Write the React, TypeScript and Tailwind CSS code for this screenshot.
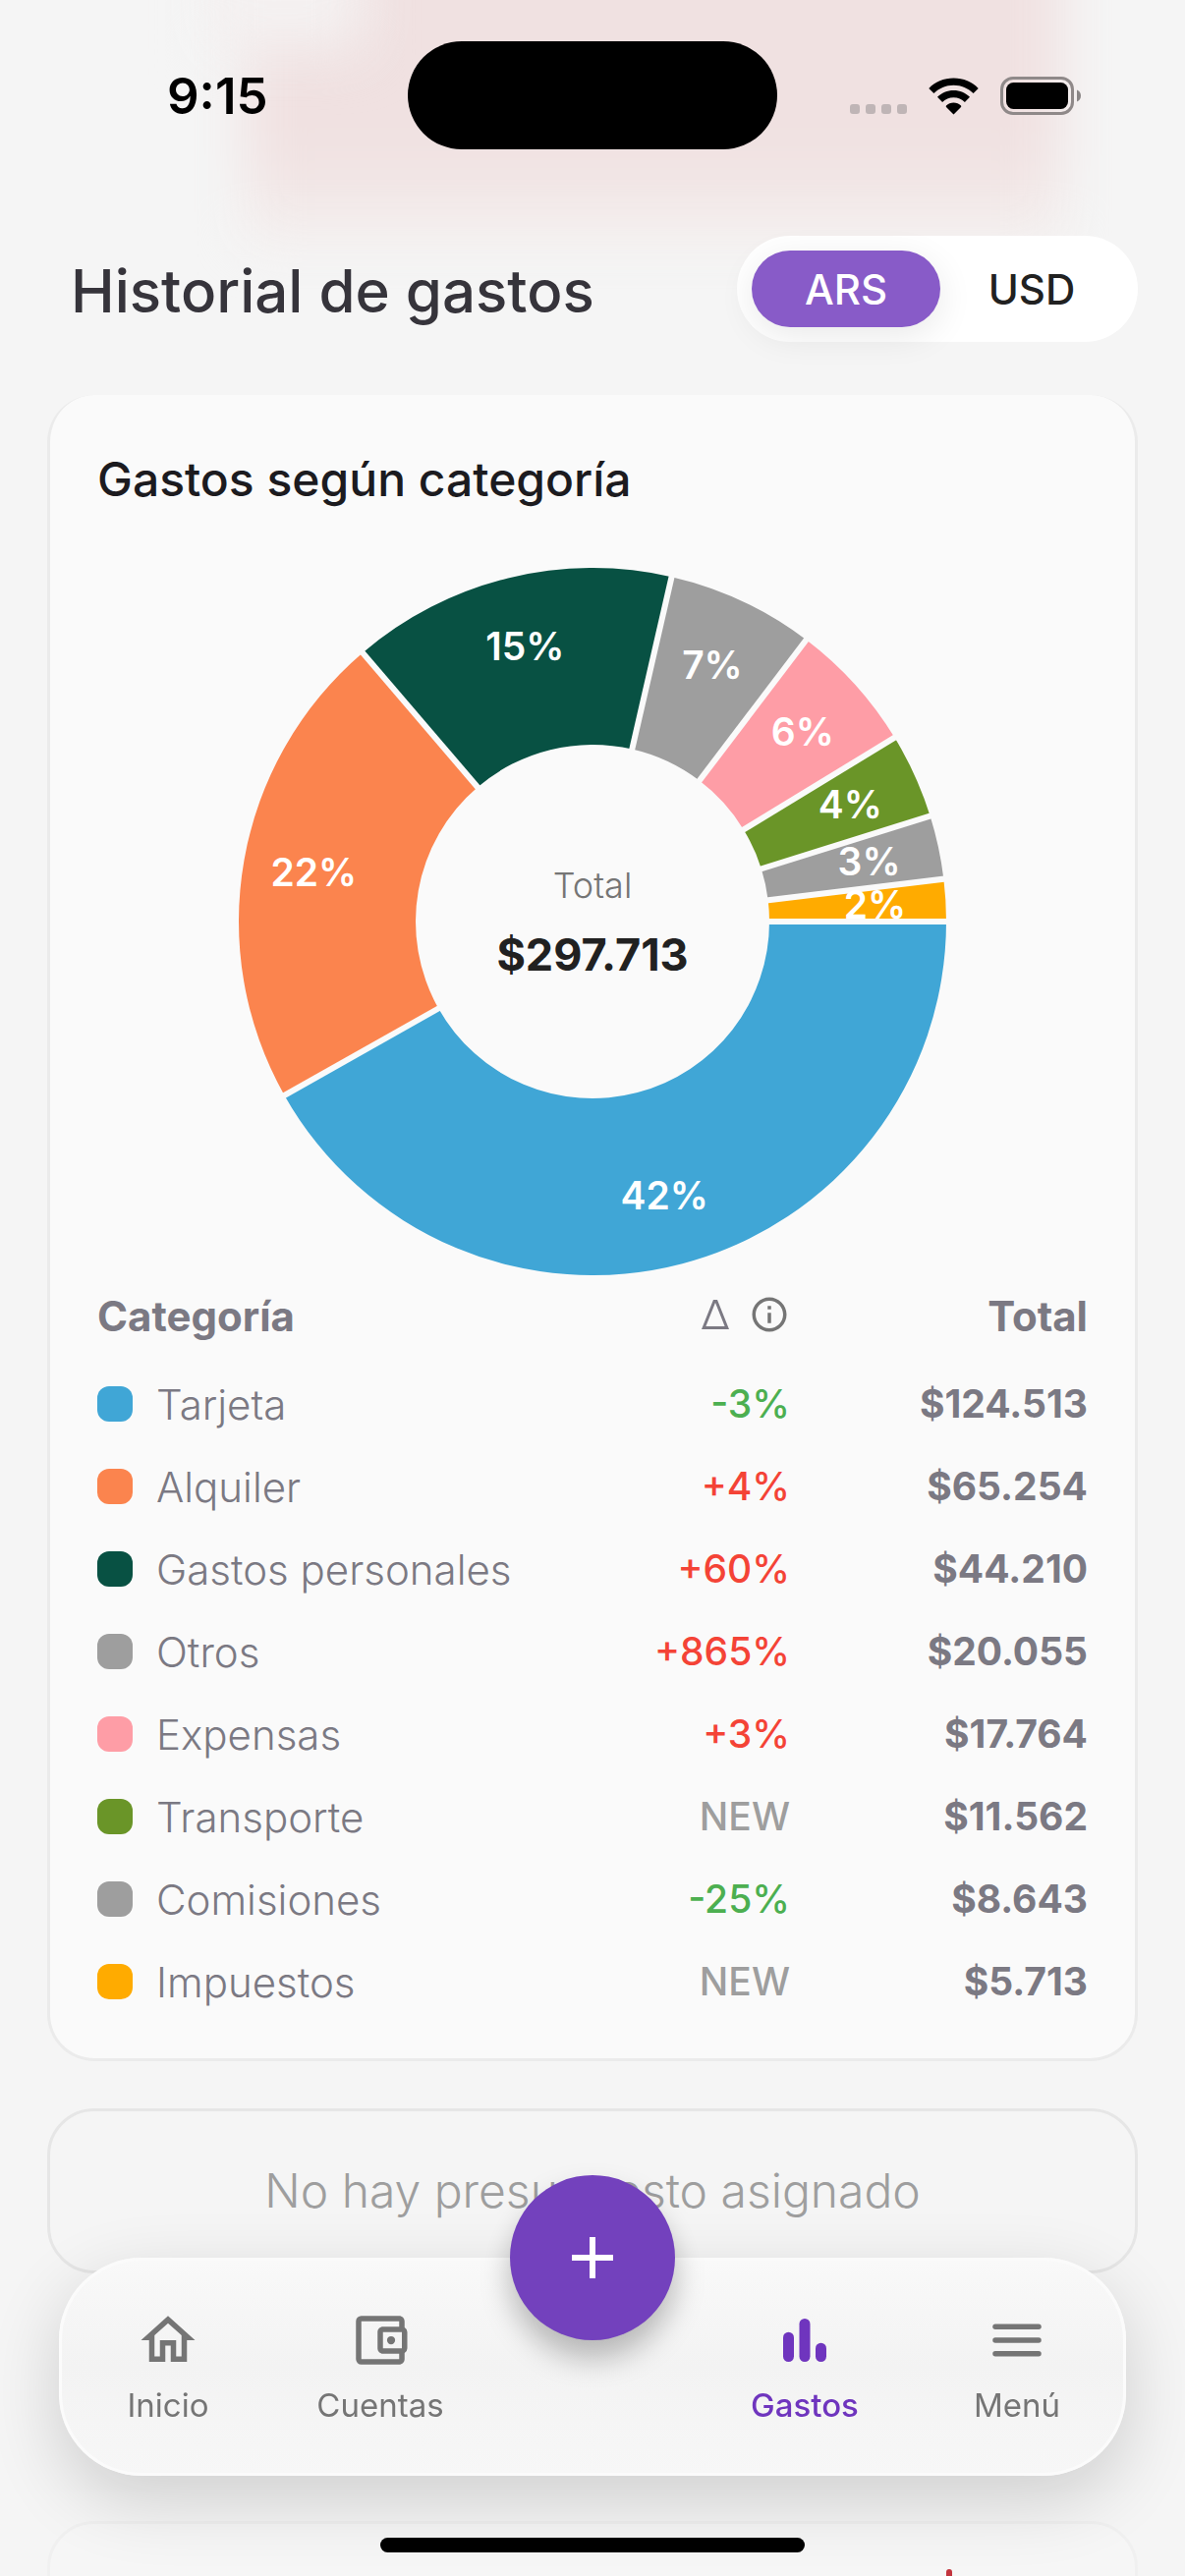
import { useState, type ReactNode } from 'react';
import clsx from 'clsx';

type Category = {
  name: string;
  amount: number;
  percent: number;
  delta: string;
  color: string;
};

const categories: Category[] = [
  { name: 'Tarjeta', amount: 124513, percent: 42, delta: '-3%', color: '#40a6d6' },
  { name: 'Alquiler', amount: 65254, percent: 22, delta: '+4%', color: '#fb844e' },
  { name: 'Gastos personales', amount: 44210, percent: 15, delta: '+60%', color: '#085143' },
  { name: 'Otros', amount: 20055, percent: 7, delta: '+865%', color: '#9e9e9e' },
  { name: 'Expensas', amount: 17764, percent: 6, delta: '+3%', color: '#fe9da6' },
  { name: 'Transporte', amount: 11562, percent: 4, delta: 'NEW', color: '#6a9528' },
  { name: 'Comisiones', amount: 8643, percent: 3, delta: '-25%', color: '#9e9e9e' },
  { name: 'Impuestos', amount: 5713, percent: 2, delta: 'NEW', color: '#ffab00' },
];

const TOTAL = 297713;
const SIZE = 720;
const OUTER = 360;
const INNER = 180;
const LABEL = 288;

function formatMoney(value: number) {
  return '$' + String(value).replace(/\B(?=(\d{3})+$)/g, '.');
}

function point(radius: number, angle: number) {
  return {
    x: SIZE / 2 + radius * Math.cos(angle),
    y: SIZE / 2 + radius * Math.sin(angle),
  };
}

function slicePath(start: number, end: number) {
  const a = point(OUTER, start);
  const b = point(OUTER, end);
  const c = point(INNER, end);
  const d = point(INNER, start);
  const large = end - start > Math.PI ? 1 : 0;
  return `M${a.x} ${a.y}A${OUTER} ${OUTER} 0 ${large} 1 ${b.x} ${b.y}L${c.x} ${c.y}A${INNER} ${INNER} 0 ${large} 0 ${d.x} ${d.y}Z`;
}

function StatusBar() {
  return (
    <div className="relative flex h-[192px] items-start justify-between pr-[106px] pl-[170px]">
      <span className="mt-[67px] text-[51px] leading-[62px] font-semibold text-black">
        9:15
      </span>
      <div className="absolute top-[42px] left-1/2 h-[110px] w-[376px] -translate-x-1/2 rounded-full bg-black" />
      <div className="mt-[78px] flex h-[39px] items-center">
        <div className="mt-[27px] flex gap-[6px]">
          {[0, 1, 2, 3].map((dot) => (
            <span key={dot} className="size-[10px] rounded-[3px] bg-[#bfb5b6]" />
          ))}
        </div>
        <svg viewBox="0 0 51 38" className="ml-[22px] h-[38px] w-[51px]">
          <path
            d="M25.500 0.500C35.500 .5 44.500 4.500 50.700 10.900L45.600 16C40.400 10.800 33.400 7.700 25.500 7.700S10.600 10.800 5.400 16L.3 10.900C6.500 4.500 15.500 .5 25.500 .5Z"
            fill="#000"
          />
          <path
            d="M25.500 13.100C31.900 13.100 37.700 15.700 42 19.800L36.900 24.900C34 22 30 20.200 25.500 20.200S17 22 14.100 24.900L9 19.800C13.300 15.700 19.100 13.100 25.500 13.100Z"
            fill="#000"
          />
          <path
            d="M25.500 25.600C28.400 25.600 31 26.700 33 28.600 33.400 29 33.400 29.500 33 29.900L25.500 37.500 18 29.900C17.600 29.500 17.600 29 18 28.600 20 26.700 22.600 25.600 25.500 25.600Z"
            fill="#000"
          />
        </svg>
        <svg viewBox="0 0 82 39" className="ml-[22px] h-[39px] w-[82px]">
          <rect x="1.500" y="1.500" width="72" height="36" rx="11.500" fill="none" stroke="#8f8989" strokeWidth="3" />
          <rect x="6" y="6" width="63" height="27" rx="7.500" fill="#000" />
          <path d="M78 13.500C80.500 14.500 82 16.800 82 19.500S80.500 24.500 78 25.500Z" fill="#8a8686" />
        </svg>
      </div>
    </div>
  );
}

function CurrencyToggle() {
  const [currency, setCurrency] = useState('ARS');

  return (
    <div className="flex h-[108px] rounded-full bg-white p-[15px]">
      {['ARS', 'USD'].map((option) => (
        <button
          key={option}
          type="button"
          aria-pressed={currency === option}
          onClick={() => setCurrency(option)}
          className={clsx(
            'h-[78px] rounded-full text-[42px] font-medium',
            currency === option
              ? 'w-[192px] bg-[#885bc8] text-white shadow-[0_9px_36px_rgba(0,0,0,0.09)]'
              : 'w-[186px] text-[#212121]'
          )}
        >
          {option}
        </button>
      ))}
    </div>
  );
}

function Donut() {
  let acc = 0;
  const slices = categories.map((item) => {
    const start = (acc / TOTAL) * Math.PI * 2;
    acc += item.amount;
    const end = (Math.min(acc, TOTAL) / TOTAL) * Math.PI * 2;
    return { ...item, start, end };
  });

  return (
    <div className="relative mx-auto size-[720px]">
      <svg viewBox={`0 0 ${SIZE} ${SIZE}`} className="size-full">
        {slices.map((slice) => (
          <path key={slice.name} d={slicePath(slice.start, slice.end)} fill={slice.color} />
        ))}
        {slices.slice(1).map((slice) => {
          const from = point(INNER - 4, slice.start);
          const to = point(OUTER + 4, slice.start);
          return (
            <line key={slice.name} x1={from.x} y1={from.y} x2={to.x} y2={to.y} stroke="#fafafa" strokeWidth="6" />
          );
        })}
        {slices.map((slice) => {
          const { x, y } = point(LABEL, (slice.start + slice.end) / 2);
          return (
            <text
              key={slice.name}
              x={x}
              y={y + 14}
              textAnchor="middle"
              className="fill-white text-[39px] font-semibold"
            >
              {slice.percent}%
            </text>
          );
        })}
        {/* first divider goes over the last label */}
        <line x1={SIZE / 2 + INNER - 4} y1={SIZE / 2} x2={SIZE} y2={SIZE / 2} stroke="#fafafa" strokeWidth="6" />
      </svg>
      <div className="absolute inset-0 flex flex-col items-center justify-center">
        <span className="text-[36px] leading-[54px] font-light text-[#757575]">Total</span>
        <span className="mt-[14px] text-[45px] leading-[60px] font-bold text-[#212121]">
          {formatMoney(TOTAL)}
        </span>
      </div>
    </div>
  );
}

function InfoIcon() {
  return (
    <svg viewBox="0 0 24 24" fill="#757575" className="size-[42px]">
      <path d="M11 7h2v2h-2zm0 4h2v6h-2zm1-9C6.480 2 2 6.480 2 12s4.480 10 10 10 10-4.480 10-10S17.520 2 12 2zm0 18c-4.410 0-8-3.590-8-8s3.590-8 8-8 8 3.590 8 8-3.590 8-8 8z" />
    </svg>
  );
}

function CategoryTable() {
  return (
    <table className="w-full text-[42px] text-[#7b7983]">
      <thead>
        <tr className="h-[89px]">
          <th scope="col" className="pb-[6px] text-left font-bold">Categoría</th>
          <th scope="col" className="w-[280px] pb-[10px] font-normal">
            <span className="flex items-center justify-end gap-5">
              <svg viewBox="0 0 28 30" className="h-[30px] w-[28px]" role="img" aria-label="Variación">
                <path d="M13 1.500H15L25.800 28.500H2.200Z" fill="none" stroke="#7b7983" strokeWidth="3" />
              </svg>
              <button type="button" aria-label="Información">
                <InfoIcon />
              </button>
            </span>
          </th>
          <th scope="col" className="w-[303px] pb-[6px] text-right font-bold">Total</th>
        </tr>
      </thead>
      <tbody>
        {categories.map((item) => (
          <tr key={item.name} className="h-[84px]">
            <td>
              <span className="flex items-center gap-6 font-light">
                <span
                  className="size-[36px] rounded-[12px]"
                  style={{ backgroundColor: item.color }}
                />
                {item.name}
              </span>
            </td>
            <td
              className={clsx(
                'text-right text-[39px] font-medium',
                item.delta.startsWith('-') && 'text-[#4caf50]',
                item.delta.startsWith('+') && 'text-[#f44336]',
                item.delta === 'NEW' && 'text-[#9e9e9e]'
              )}
            >
              {item.delta}
            </td>
            <td className="text-right text-[39px] font-bold">{formatMoney(item.amount)}</td>
          </tr>
        ))}
      </tbody>
    </table>
  );
}

function NavItem({
  label,
  active,
  children,
}: {
  label: string;
  active?: boolean;
  children: ReactNode;
}) {
  return (
    <a
      href="#"
      aria-current={active ? 'page' : undefined}
      className={clsx(
        'flex flex-1 flex-col items-center gap-[12px] pt-[48px] text-[33px] leading-[42px]',
        active ? 'font-medium text-[#6f35be]' : 'text-[#757575]'
      )}
    >
      <svg viewBox="0 0 24 24" fill="currentColor" className="size-[66px]">
        {children}
      </svg>
      {label}
    </a>
  );
}

function BottomNav() {
  return (
    <nav className="fixed inset-x-[60px] bottom-[102px] grid h-[222px] grid-cols-5 rounded-[84px] border-[3px] border-[#fbfbfb] bg-linear-to-b from-[#f9f9f9] via-[#f3f3f3] to-[#f7f7f7] shadow-[0_24px_72px_rgba(0,0,0,0.16)]">
      <NavItem label="Inicio">
        <path d="M12 5.690l5 4.500V18h-2v-6H9v6H7v-7.810l5-4.500M12 3L2 12h3v8h6v-6h2v6h6v-8h3L12 3z" />
      </NavItem>
      <NavItem label="Cuentas">
        <path d="M21 7.280V5c0-1.100-.9-2-2-2H5a2 2 0 0 0-2 2v14a2 2 0 0 0 2 2h14c1.100 0 2-.9 2-2v-2.280A2 2 0 0 0 22 15V9a2 2 0 0 0-1-1.720zM20 9v6h-7V9h7zM5 19V5h14v2h-6c-1.100 0-2 .9-2 2v6c0 1.100.9 2 2 2h6v2H5z" />
        <circle cx="16" cy="12" r="1.500" />
      </NavItem>
      <div className="relative">
        <button
          type="button"
          aria-label="Agregar gasto"
          className="absolute top-[-87px] left-1/2 flex size-[168px] -translate-x-1/2 items-center justify-center rounded-full bg-[#7341bd] shadow-[0_18px_30px_rgba(0,0,0,0.26)]"
        >
          <svg viewBox="0 0 42 42" className="size-[42px]">
            <path d="M21 0v42M0 21h42" stroke="#fff" strokeWidth="6" />
          </svg>
        </button>
      </div>
      <NavItem label="Gastos" active>
        <rect x="4" y="9" width="4" height="11" rx="2" />
        <rect x="10" y="4" width="4" height="16" rx="2" />
        <rect x="16" y="13" width="4" height="7" rx="2" />
      </NavItem>
      <NavItem label="Menú">
        <rect x="3" y="6" width="18" height="2" rx="1" />
        <rect x="3" y="11" width="18" height="2" rx="1" />
        <rect x="3" y="16" width="18" height="2" rx="1" />
      </NavItem>
    </nav>
  );
}

export default function App() {
  return (
    <div className="relative isolate h-screen overflow-hidden bg-[#f5f5f5] font-[Inter,'Liberation_Sans',sans-serif]">
      {/* content blurred behind the top bar */}
      <div className="absolute -top-20 right-[126px] left-[250px] -z-10 h-[325px] bg-linear-to-b from-[#f0e1e1] from-70% to-[#f3eeed] blur-[26px]" />
      <div className="absolute -top-20 left-[210px] -z-10 h-[130px] w-[160px] bg-[#f4f1f1] blur-[28px]" />

      <StatusBar />

      <header className="mt-[48px] flex items-center justify-between pr-[48px] pl-[72px]">
        <h1 className="pt-[3px] text-[60px] leading-[72px] font-medium text-[#36343b]">
          Historial de gastos
        </h1>
        <CurrencyToggle />
      </header>

      <main className="mt-[54px] px-[48px]">
        <section className="rounded-[48px] border-[3px] border-t-0 border-[#ebebeb] bg-[#fafafa] px-[48px] pt-[54px] pb-[36px]">
          <h2 className="mb-[59px] text-[48px] leading-[63px] font-medium text-[#1c1b1f]">
            Gastos según categoría
          </h2>
          <Donut />
          <CategoryTable />
        </section>

        <section className="mt-[48px] rounded-[48px] border-[3px] border-[#e6e6e6] py-[48px] text-center text-[48px] leading-[66px] font-light text-[#9e9e9e]">
          No hay presupuesto asignado
        </section>

        <section className="mt-[252px] flex h-[240px] justify-end rounded-[48px] border-[3px] border-[#f0f0f0] bg-[#f6f6f6] pt-[46px] pr-[186px]">
          <span className="h-[120px] w-[6px] rounded-full bg-[#c2343d]" />
        </section>
      </main>

      <BottomNav />
      <div className="fixed bottom-[24px] left-1/2 h-[15px] w-[432px] -translate-x-1/2 rounded-full bg-black" />
    </div>
  );
}
